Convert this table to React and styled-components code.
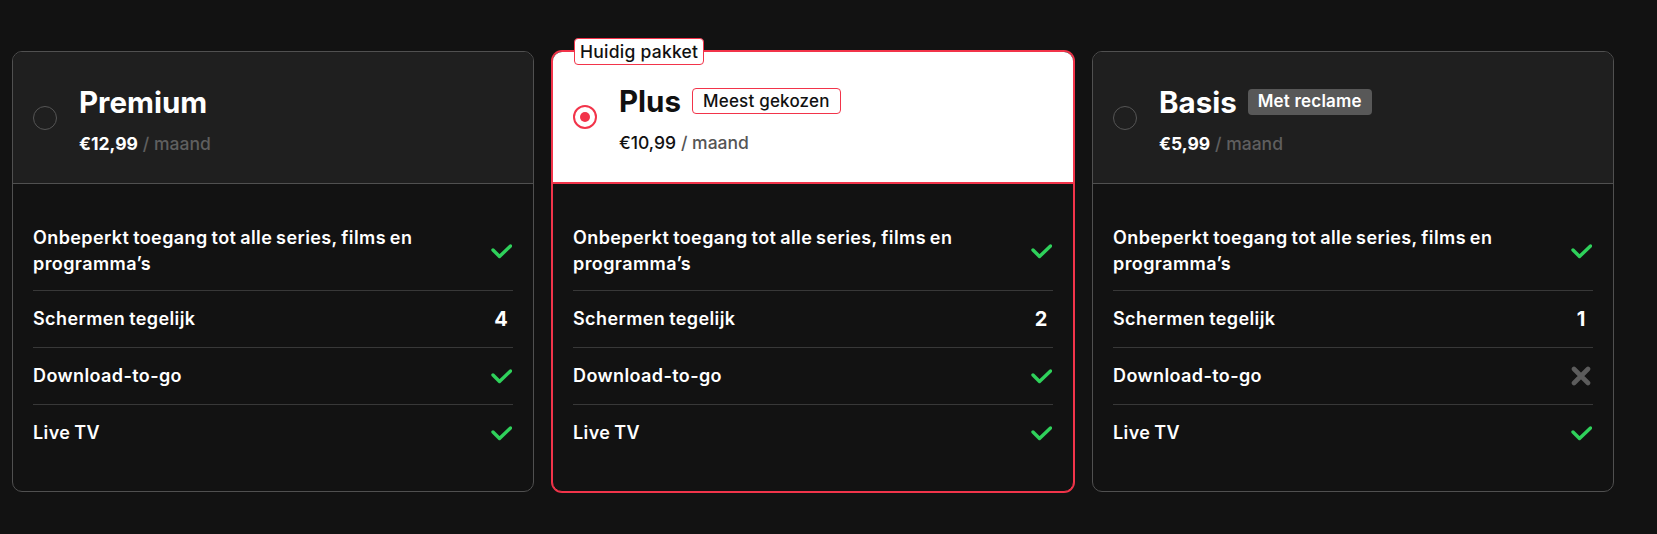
import React from "react";
import styled, { createGlobalStyle, css } from "styled-components";

const RED = "#f2344a";

const Global = createGlobalStyle`
  html, body { margin: 0; padding: 0; background: #121212; }
  body { font-family: Inter, "Noto Sans", sans-serif; color: #fff; -webkit-font-smoothing: antialiased; }
  * { box-sizing: border-box; }
`;

const Page = styled.div`
  min-height: 534px;
  background: #121212;
  padding: 51px 12px 0 12px;
`;

const Grid = styled.div`
  display: grid;
  grid-template-columns: repeat(3, 522px);
  column-gap: 18px;
  align-items: start;
`;

const Card = styled.div`
  position: relative;
  border: 1px solid #505050;
  border-radius: 10px;
  background: #121212;
  height: 441px;
  ${(p) =>
    p.$selected &&
    css`
      border-color: ${RED};
      box-shadow: 0 0 0 1px ${RED};
    `}
`;

const CurrentBadge = styled.div`
  position: absolute;
  top: -14px;
  left: 21px;
  height: 27px;
  padding: 0 5px;
  display: flex;
  align-items: center;
  background: #fff;
  color: #111;
  border: 1px solid ${RED};
  border-radius: 4px;
  font-size: 17.5px;
  font-weight: 500;
  letter-spacing: 0.25px;
`;

const Header = styled.div`
  display: flex;
  align-items: center;
  gap: 22px;
  height: 132px;
  padding: 0 20px 0 20px;
  border-radius: 9px 9px 0 0;
  background: ${(p) => (p.$selected ? "#fff" : "#1f1f1f")};
  border-bottom: ${(p) => (p.$selected ? `2px solid ${RED}` : "1px solid #505050")};
`;

const Radio = styled.span`
  flex: none;
  width: 24px;
  height: 24px;
  border-radius: 50%;
  display: flex;
  align-items: center;
  justify-content: center;
  border: ${(p) => (p.$checked ? `2.5px solid ${RED}` : "1px solid #555")};
  &::after {
    content: "";
    display: ${(p) => (p.$checked ? "block" : "none")};
    width: 10px;
    height: 10px;
    border-radius: 50%;
    background: ${RED};
  }
`;

const HeadText = styled.div`
  display: flex;
  flex-direction: column;
  gap: 12px;
  padding-top: 4px;
`;

const TitleRow = styled.div`
  display: flex;
  align-items: center;
  gap: 11px;
  height: 36px;
`;

const Title = styled.h2`
  margin: 0;
  font-size: 29.5px;
  font-weight: 700;
  letter-spacing: 0;
  line-height: 36px;
  color: ${(p) => (p.$dark ? "#111" : "#fff")};
`;

const Tag = styled.span`
  display: inline-flex;
  align-items: center;
  height: 26px;
  padding: 0 10px;
  border-radius: 4px;
  font-size: 17px;
  line-height: 1;
  letter-spacing: 0.2px;
  ${(p) =>
    p.$variant === "outline"
      ? css`
          border: 1px solid ${RED};
          background: #fff;
          color: #111;
          font-weight: 500;
        `
      : css`
          background: #585858;
          color: #fff;
          font-weight: 600;
        `}
`;

const Price = styled.div`
  font-size: 17.5px;
  line-height: 24px;
  color: ${(p) => (p.$dark ? "#111" : "#fff")};
  b {
    font-weight: ${(p) => (p.$dark ? 500 : 700)};
  }
  span {
    color: ${(p) => (p.$dark ? "#555" : "#5f5f5f")};
    font-weight: 500;
  }
`;

const Body = styled.div`
  padding: 26px 20px 0 20px;
`;

const Row = styled.div`
  display: flex;
  align-items: center;
  justify-content: space-between;
  gap: 20px;
  padding: 15px 0;
  &:first-child {
    padding-bottom: 13px;
  }
  & + & {
    border-top: 1px solid #383838;
  }
`;

const Label = styled.div`
  font-size: 18px;
  line-height: 26px;
  font-weight: 600;
  letter-spacing: 0.4px;
  word-spacing: -1px;
  color: #fff;
  max-width: 430px;
`;

const Value = styled.div`
  flex: none;
  width: 24px;
  display: flex;
  justify-content: center;
  font-size: 20px;
  font-weight: 700;
  color: #fff;
`;

const Check = () => (
  <svg width="21" height="15" viewBox="0 0 21 15" fill="none">
    <polyline
      points="2,6 8.5,12.5 19.5,2"
      stroke="#2fd15b"
      strokeWidth="3.4"
      strokeLinecap="round"
      strokeLinejoin="round"
    />
  </svg>
);

const Cross = () => (
  <svg width="20" height="20" viewBox="0 0 20 20" fill="none">
    <path d="M3 3 L17 17 M17 3 L3 17" stroke="#5c5c5c" strokeWidth="4.6" strokeLinecap="round" />
  </svg>
);

const plans = [
  { name: "Premium", price: "€12,99", screens: "4", download: true },
  { name: "Plus", price: "€10,99", screens: "2", download: true, selected: true, current: true, tag: "Meest gekozen", tagVariant: "outline" },
  { name: "Basis", price: "€5,99", screens: "1", download: false, tag: "Met reclame", tagVariant: "grey" },
];

export default function App() {
  return (
    <>
      <Global />
      <Page>
        <Grid>
          {plans.map((p) => (
            <Card key={p.name} $selected={p.selected}>
              {p.current && <CurrentBadge>Huidig pakket</CurrentBadge>}
              <Header $selected={p.selected}>
                <Radio $checked={p.selected} />
                <HeadText>
                  <TitleRow>
                    <Title $dark={p.selected}>{p.name}</Title>
                    {p.tag && <Tag $variant={p.tagVariant}>{p.tag}</Tag>}
                  </TitleRow>
                  <Price $dark={p.selected}>
                    <b>{p.price}</b> <span>/ maand</span>
                  </Price>
                </HeadText>
              </Header>
              <Body>
                <Row>
                  <Label>Onbeperkt toegang tot alle series, films en programma’s</Label>
                  <Value><Check /></Value>
                </Row>
                <Row>
                  <Label>Schermen tegelijk</Label>
                  <Value>{p.screens}</Value>
                </Row>
                <Row>
                  <Label>Download-to-go</Label>
                  <Value>{p.download ? <Check /> : <Cross />}</Value>
                </Row>
                <Row>
                  <Label>Live TV</Label>
                  <Value><Check /></Value>
                </Row>
              </Body>
            </Card>
          ))}
        </Grid>
      </Page>
    </>
  );
}
